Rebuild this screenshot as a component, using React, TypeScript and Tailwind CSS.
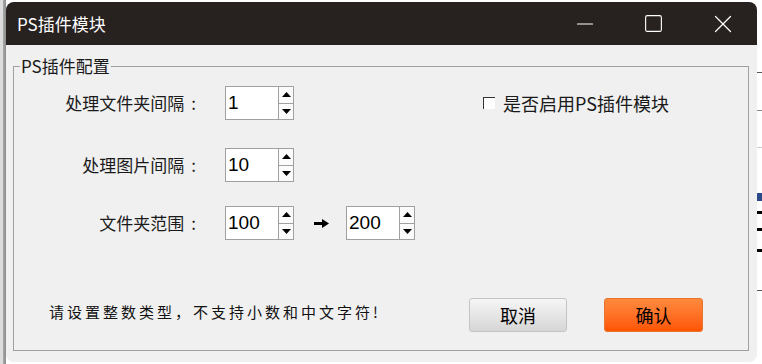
import { Minus, Square, X } from 'lucide-react'

function Spin({ value }: { value: string }) {
  return (
    <div className="flex h-[34px] w-[69px] border border-[#a0a0a0] bg-white">
      <div className="flex flex-1 items-center pl-[2px] font-['Liberation_Sans',sans-serif] text-[19px] text-black">{value}</div>
      <div className="flex w-[15px] flex-col border-l border-[#a0a0a0] bg-[#fbfbfb]">
        <div className="flex flex-1 items-center justify-center border-b border-[#a0a0a0]">
          <svg width="9" height="5" viewBox="0 0 9 5"><polygon points="0,5 4.5,0 9,5" fill="#000" /></svg>
        </div>
        <div className="flex flex-1 items-center justify-center">
          <svg width="9" height="5" viewBox="0 0 9 5"><polygon points="0,0 9,0 4.5,5" fill="#000" /></svg>
        </div>
      </div>
    </div>
  )
}

function Label({ text }: { text: string }) {
  return (
    <div className="w-[182px] text-right text-[17px] leading-[24px] text-[#1a1a1a]">
      {text}
      <span className="ml-[7px]">:</span>
    </div>
  )
}

export default function App() {
  return (
    <div className="flex h-[364px] w-[762px] overflow-hidden bg-white font-['Noto_Sans_CJK_SC',sans-serif]">
      {/* desktop behind, left edge */}
      <div className="flex h-full w-[6px]">
        <div className="h-full w-[3px] bg-[#dcdcdc]" />
        <div className="h-full w-[3px] bg-gradient-to-r from-[#a8a8a8] to-[#8c8c8c]" />
      </div>

      {/* window */}
      <div className="my-[2px] flex flex-1 flex-col overflow-hidden rounded-[8px] bg-[#f0f0f0]">
        <div className="flex h-[43px] shrink-0 items-center bg-[#27211f]">
          <div className="flex-1 pl-[11px] text-[17px] text-white">PS插件模块</div>
          <div className="flex h-full w-[69px] items-center justify-center text-white">
            <Minus size={26} strokeWidth={1} />
          </div>
          <div className="flex h-full w-[69px] items-center justify-center text-white">
            <Square size={21} strokeWidth={1.3} />
          </div>
          <div className="flex h-full w-[69px] items-center justify-center text-white">
            <X size={30} strokeWidth={1} />
          </div>
        </div>

        <div className="flex-1 pl-[7px] pr-[8px] pt-[21px]">
          <div className="relative flex h-[285px] flex-col border border-[#a0a0a0]">
            <div className="absolute -top-[12px] left-[6px] bg-[#f0f0f0] px-[1px] text-[17px] leading-[22px] text-[#1a1a1a]">
              PS插件配置
            </div>

            {/* row 1 */}
            <div className="mt-[19px] flex h-[34px] items-center">
              <Label text="处理文件夹间隔" />
              <div className="ml-[29px]">
                <Spin value="1" />
              </div>
              <div className="ml-[189px] flex items-center">
                <div className="h-[12px] w-[12px] border-l border-t border-[#333] bg-white" />
                <span className="ml-[8px] text-[18px] leading-[24px] text-[#1a1a1a]">是否启用PS插件模块</span>
              </div>
            </div>

            {/* row 2 */}
            <div className="mt-[28px] flex h-[34px] items-center">
              <Label text="处理图片间隔" />
              <div className="ml-[29px]">
                <Spin value="10" />
              </div>
            </div>

            {/* row 3 */}
            <div className="mt-[24px] flex h-[34px] items-center">
              <Label text="文件夹范围" />
              <div className="ml-[29px]">
                <Spin value="100" />
              </div>
              <svg className="ml-[20px]" width="15" height="9" viewBox="0 0 15 9">
                <rect x="0" y="3" width="9" height="3" fill="#000" />
                <polygon points="8,0 15,4.5 8,9" fill="#000" />
              </svg>
              <div className="ml-[17px]">
                <Spin value="200" />
              </div>
            </div>

            {/* bottom row */}
            <div className="mt-[58px] flex h-[34px] items-center">
              <div className="mb-[6px] ml-[35px] text-[15px] tracking-[3px] text-[#111]">
                请设置整数类型，不支持小数和中文字符!
              </div>
              <div className="ml-auto mr-[45px] flex gap-[37px]">
                <button className="flex h-[34px] w-[98px] items-center justify-center rounded-[3px] border border-[#c4c4c4] bg-gradient-to-b from-[#f6f6f6] to-[#d6d6d6] text-[18px] text-black">
                  取消
                </button>
                <button className="flex h-[34px] w-[99px] items-center justify-center rounded-[3px] border border-[#e8752f] bg-gradient-to-b from-[#ff8a3c] to-[#ff5400] text-[18px] text-black">
                  确认
                </button>
              </div>
            </div>
          </div>
        </div>
      </div>

      {/* desktop behind, right edge */}
      <div className="flex h-full w-[5px] flex-col bg-white">
        <div className="mt-[72px] h-px bg-[#555]" />
        <div className="mt-[37px] h-px bg-[#888]" />
        <div className="mt-[36px] h-px bg-[#ccc]" />
        <div className="mt-[45px] h-[8px] bg-[#2a4a8a]" />
        <div className="mt-[10px] h-[3px] bg-black" />
        <div className="mt-[14px] h-[3px] bg-black" />
        <div className="mt-[18px] h-[3px] bg-black" />
        <div className="mt-[38px] h-px bg-[#555]" />
      </div>
    </div>
  )
}
